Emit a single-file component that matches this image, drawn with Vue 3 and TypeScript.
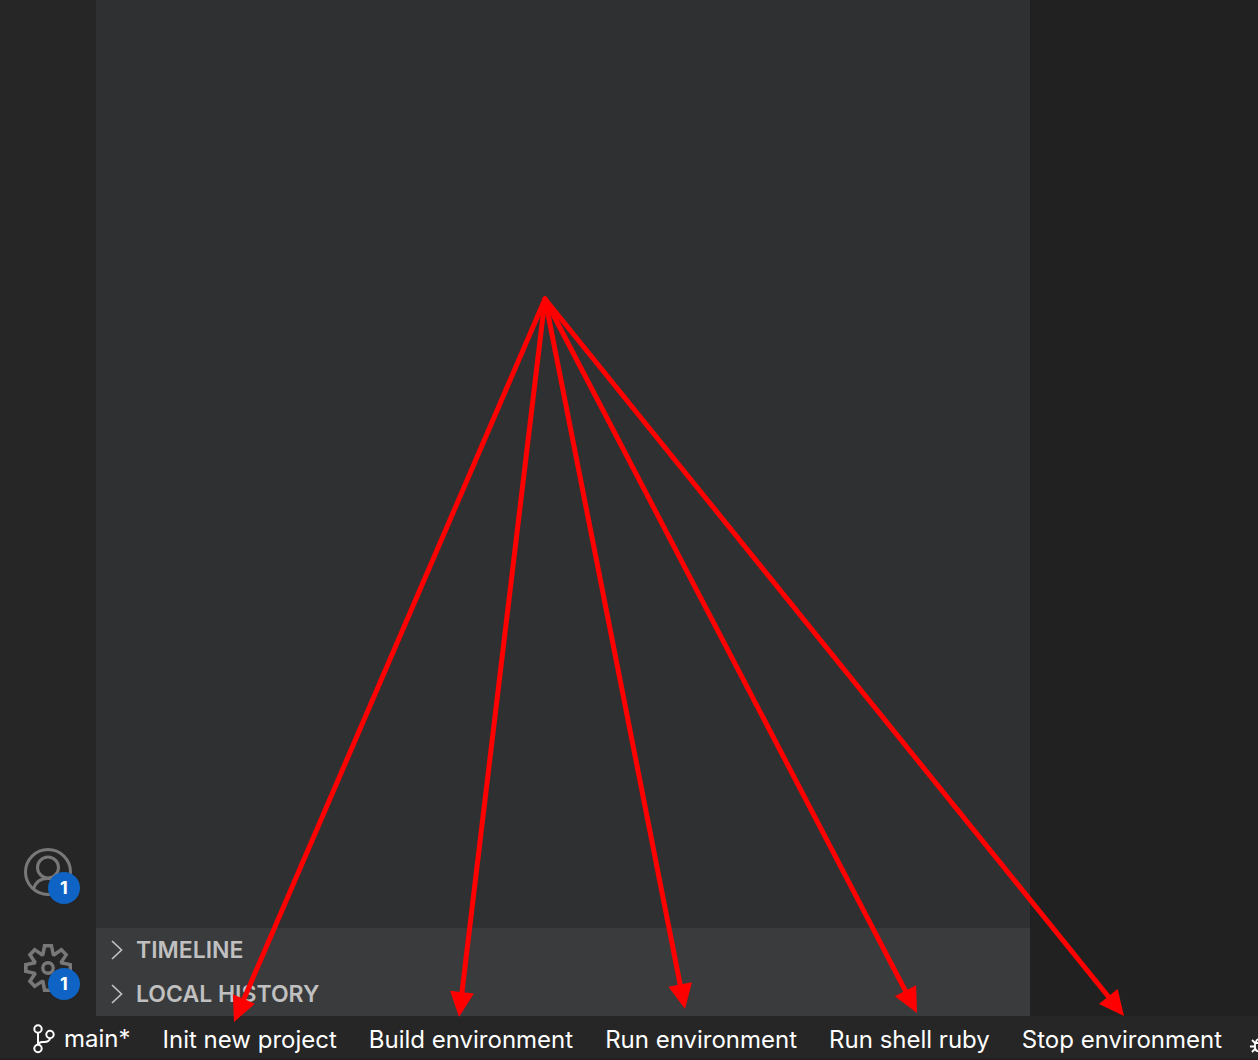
<script setup lang="ts">
interface Point {
  x: number
  y: number
}

const origin: Point = { x: 545, y: 299 }
const tips: Point[] = [
  { x: 234, y: 1022 },
  { x: 459, y: 1017 },
  { x: 685, y: 1009 },
  { x: 917, y: 1013 },
  { x: 1124, y: 1016 },
]

const headLength = 25
const headHalf = 12

const arrows = tips.map((tip) => {
  const length = Math.hypot(tip.x - origin.x, tip.y - origin.y)
  const ux = (tip.x - origin.x) / length
  const uy = (tip.y - origin.y) / length
  const bx = tip.x - ux * headLength
  const by = tip.y - uy * headLength
  return {
    bx,
    by,
    head: `${tip.x},${tip.y} ${bx - uy * headHalf},${by + ux * headHalf} ${bx + uy * headHalf},${by - ux * headHalf}`,
  }
})

const sections = ['TIMELINE', 'LOCAL HISTORY']
const commands = [
  'Init new project',
  'Build environment',
  'Run environment',
  'Run shell ruby',
  'Stop environment',
]
</script>

<template>
  <div class="window">
    <div class="workbench">
      <nav class="activity">
        <button class="action" type="button" aria-label="Accounts">
          <svg viewBox="0 0 48 48" fill="none" stroke="currentColor" stroke-width="3">
            <circle cx="24" cy="24" r="22.5" />
            <circle cx="24" cy="19.500" r="10.5" />
            <path d="M9.500 41.500C11 35 16 30.500 24 30.500S37 35 38.500 41.500" />
          </svg>
          <span class="badge">1</span>
        </button>
        <button class="action" type="button" aria-label="Manage">
          <svg viewBox="0 0 24 24" fill="currentColor" fill-rule="evenodd">
            <path d="M19.85 8.75l4.15.83v4.84l-4.15.83 2.35 3.52-3.43 3.43-3.52-2.35-.83 4.15H9.58l-.83-4.15-3.52 2.35-3.43-3.43 2.35-3.52L0 14.42V9.58l4.15-.83L1.8 5.23 5.23 1.8l3.52 2.35L9.58 0h4.84l.83 4.15 3.52-2.35 3.43 3.43-2.35 3.52zm-1.57 5.07l4-.81v-2l-4-.81-.54-1.3 2.29-3.43-1.43-1.43-3.43 2.29-1.3-.54-.81-4h-2l-.81 4-1.3.54-3.43-2.29-1.43 1.43L6.38 8.9l-.54 1.3-4 .81v2l4 .81.54 1.3-2.29 3.43 1.43 1.43 3.43-2.29 1.3.54.81 4h2l.81-4 1.3-.54 3.43 2.29 1.43-1.43-2.29-3.43.54-1.3z" />
            <circle cx="12" cy="12" r="2.600" fill="none" stroke="currentColor" stroke-width="1.700" />
          </svg>
          <span class="badge">1</span>
        </button>
      </nav>
      <aside class="sidebar">
        <button v-for="name in sections" :key="name" class="section" type="button">
          <svg viewBox="0 0 12 20" fill="none" stroke="currentColor" stroke-width="1.700">
            <path d="M1 1L10.500 10L1 19" />
          </svg>
          <span>{{ name }}</span>
        </button>
      </aside>
      <main class="editor"></main>
    </div>
    <footer class="status">
      <button class="item branch" type="button">
        <svg viewBox="0 0 24 30" fill="none" stroke="currentColor" stroke-width="2">
          <circle cx="6" cy="5" r="3.700" />
          <circle cx="6" cy="24.500" r="3.700" />
          <circle cx="18" cy="10.500" r="3.700" />
          <path d="M6 9V20.500M18 14.500C17 19 13 17.500 10 18C7.500 18.500 6 19 6 21" />
        </svg>
        <span>main*</span>
      </button>
      <button v-for="name in commands" :key="name" class="item" type="button">{{ name }}</button>
      <button class="item debug" type="button" aria-label="Debug">
        <svg viewBox="0 0 18 18" fill="none" stroke="currentColor" stroke-width="1.800">
          <path d="M5 7H13V11C13 17 5 17 5 11ZM6 7C6 2 12 2 12 7M5 7L2 4M5 10.500H0M5 13L2 16M13 7L16 4M13 10.500H18M13 13L16 16" />
        </svg>
      </button>
    </footer>
    <svg class="arrows" viewBox="0 0 1258 1060" aria-hidden="true">
      <g v-for="(arrow, i) in arrows" :key="i">
        <line :x1="origin.x" :y1="origin.y" :x2="arrow.bx" :y2="arrow.by" />
        <polygon :points="arrow.head" />
      </g>
    </svg>
  </div>
</template>

<style>
body {
  margin: 0;
  background: #262626;
}
</style>

<style scoped>
.window {
  position: relative;
  display: flex;
  flex-direction: column;
  min-height: 100vh;
  overflow: hidden;
  font-family: Inter, "Liberation Sans", sans-serif;
}

button {
  margin: 0;
  padding: 0;
  border: 0;
  background: none;
  color: inherit;
  font: inherit;
}

svg {
  display: block;
  flex: none;
}

.workbench {
  display: flex;
  flex: 1;
}

.activity {
  display: flex;
  flex-direction: column;
  justify-content: flex-end;
  width: 96px;
  background: #262626;
  color: #787878;
}

.action {
  position: relative;
  padding: 24px;
}

.action svg {
  width: 48px;
  height: 48px;
}

.badge {
  position: absolute;
  right: 16px;
  bottom: 16px;
  width: 32px;
  border-radius: 16px;
  background: #0e63c4;
  color: #fff;
  font-size: 18px;
  font-weight: 700;
  line-height: 32px;
  text-align: center;
}

.sidebar {
  display: flex;
  flex: 1;
  flex-direction: column;
  justify-content: flex-end;
  background: #2f3032;
}

.section {
  display: flex;
  align-items: center;
  gap: 13px;
  height: 44px;
  padding: 0 15px;
  background: #3a3b3d;
  color: #c0c0c0;
  font-size: 23px;
  font-weight: 600;
}

.section svg {
  width: 12px;
  height: 20px;
}

.editor {
  width: 228px;
  background: #212121;
}

.status {
  display: flex;
  gap: 32px;
  box-sizing: border-box;
  height: 44px;
  padding: 2px 0 0 32px;
  box-shadow: inset 0 -2px #241e22;
  background: #262626;
  color: #fff;
  font-size: 24px;
  line-height: 44px;
}

.item {
  flex: none;
  white-space: nowrap;
}

.branch {
  display: flex;
  align-items: center;
  gap: 8px;
}

.branch svg {
  width: 24px;
  height: 30px;
}

.debug {
  margin-left: -4px;
}

.debug svg {
  width: 18px;
  height: 18px;
  margin-top: 12px;
}

.arrows {
  position: absolute;
  inset: 0;
  width: 100%;
  height: 100%;
  pointer-events: none;
  fill: #f00;
}

.arrows line {
  stroke: #f00;
  stroke-width: 5;
  stroke-linecap: round;
}
</style>
